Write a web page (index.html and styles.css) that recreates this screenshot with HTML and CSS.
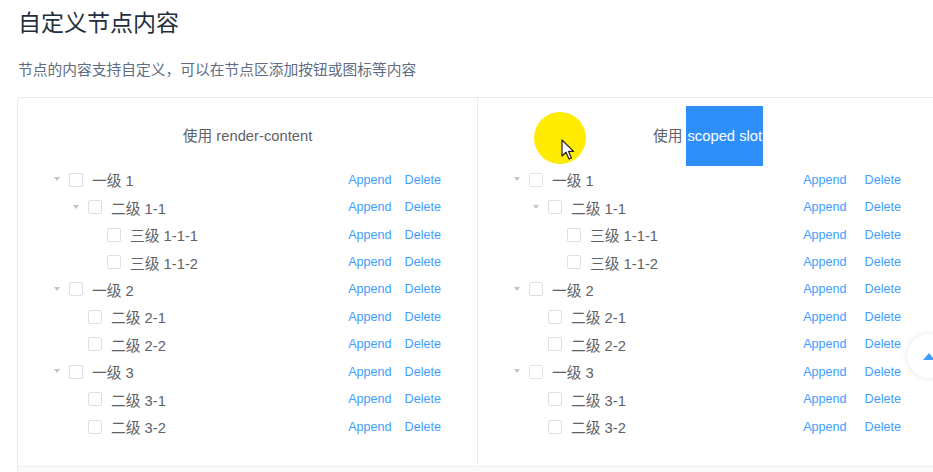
FILE: index.html
```html
<!DOCTYPE html>
<html lang="zh">
<head>
<meta charset="utf-8">
<title>自定义节点内容</title>
<link rel="stylesheet" href="styles.css">
</head>
<body>
<div class="page">
  <h3 class="title">自定义节点内容</h3>
  <p class="desc">节点的内容支持自定义，可以在节点区添加按钮或图标等内容</p>
  <div class="demo">
    <div class="cols">
      <div class="col col-left">
        <div class="col-head">使用 render-content</div>
        <div class="tree">
          <div class="node"><span class="caret"></span><span class="cb"></span><span class="label">一级 1</span><span class="ops"><a>Append</a><a>Delete</a></span></div>
          <div class="node lv2"><span class="caret"></span><span class="cb"></span><span class="label">二级 1-1</span><span class="ops"><a>Append</a><a>Delete</a></span></div>
          <div class="node lv3"><span class="caret leaf"></span><span class="cb"></span><span class="label">三级 1-1-1</span><span class="ops"><a>Append</a><a>Delete</a></span></div>
          <div class="node lv3"><span class="caret leaf"></span><span class="cb"></span><span class="label">三级 1-1-2</span><span class="ops"><a>Append</a><a>Delete</a></span></div>
          <div class="node"><span class="caret"></span><span class="cb"></span><span class="label">一级 2</span><span class="ops"><a>Append</a><a>Delete</a></span></div>
          <div class="node lv2"><span class="caret leaf"></span><span class="cb"></span><span class="label">二级 2-1</span><span class="ops"><a>Append</a><a>Delete</a></span></div>
          <div class="node lv2"><span class="caret leaf"></span><span class="cb"></span><span class="label">二级 2-2</span><span class="ops"><a>Append</a><a>Delete</a></span></div>
          <div class="node"><span class="caret"></span><span class="cb"></span><span class="label">一级 3</span><span class="ops"><a>Append</a><a>Delete</a></span></div>
          <div class="node lv2"><span class="caret leaf"></span><span class="cb"></span><span class="label">二级 3-1</span><span class="ops"><a>Append</a><a>Delete</a></span></div>
          <div class="node lv2"><span class="caret leaf"></span><span class="cb"></span><span class="label">二级 3-2</span><span class="ops"><a>Append</a><a>Delete</a></span></div>
        </div>
      </div>
      <div class="col col-right">
        <div class="col-head">使用 <span class="sel">scoped slot</span></div>
        <div class="tree">
          <div class="node"><span class="caret"></span><span class="cb"></span><span class="label">一级 1</span><span class="ops"><a>Append</a><a>Delete</a></span></div>
          <div class="node lv2"><span class="caret"></span><span class="cb"></span><span class="label">二级 1-1</span><span class="ops"><a>Append</a><a>Delete</a></span></div>
          <div class="node lv3"><span class="caret leaf"></span><span class="cb"></span><span class="label">三级 1-1-1</span><span class="ops"><a>Append</a><a>Delete</a></span></div>
          <div class="node lv3"><span class="caret leaf"></span><span class="cb"></span><span class="label">三级 1-1-2</span><span class="ops"><a>Append</a><a>Delete</a></span></div>
          <div class="node"><span class="caret"></span><span class="cb"></span><span class="label">一级 2</span><span class="ops"><a>Append</a><a>Delete</a></span></div>
          <div class="node lv2"><span class="caret leaf"></span><span class="cb"></span><span class="label">二级 2-1</span><span class="ops"><a>Append</a><a>Delete</a></span></div>
          <div class="node lv2"><span class="caret leaf"></span><span class="cb"></span><span class="label">二级 2-2</span><span class="ops"><a>Append</a><a>Delete</a></span></div>
          <div class="node"><span class="caret"></span><span class="cb"></span><span class="label">一级 3</span><span class="ops"><a>Append</a><a>Delete</a></span></div>
          <div class="node lv2"><span class="caret leaf"></span><span class="cb"></span><span class="label">二级 3-1</span><span class="ops"><a>Append</a><a>Delete</a></span></div>
          <div class="node lv2"><span class="caret leaf"></span><span class="cb"></span><span class="label">二级 3-2</span><span class="ops"><a>Append</a><a>Delete</a></span></div>
        </div>
      </div>
    </div>
    <div class="control"></div>
  </div>
</div>
<div class="cursor-spot"></div>
<svg class="cursor" width="14" height="22" viewBox="0 0 14 22"><path d="M1 1 L1 17 L5 13.2 L8 20 L10.4 19 L7.6 12.4 L12.6 12.4 Z" fill="#fff" stroke="#222" stroke-width="1.2" stroke-linejoin="round"/></svg>
<div class="backtop"><span class="backtop-caret"></span></div>
</body>
</html>
```

FILE: styles.css
```css
html, body {
  margin: 0;
  padding: 0;
  overflow: hidden;
  background: #fff;
}
body {
  font-family: "Liberation Sans", "Noto Sans CJK SC", sans-serif;
  color: #606266;
  width: 933px;
  height: 472px;
  position: relative;
}
.page {
  padding-left: 17px;
}
.title {
  margin: 0;
  padding-top: 8px;
  height: 30px;
  line-height: 30px;
  font-size: 23px;
  font-weight: normal;
  color: #1f2f3d;
  padding-left: 1px;
}
.desc {
  margin: 21px 0 0 1px;
  height: 22px;
  line-height: 22px;
  font-size: 14.75px;
  color: #5e6d82;
}
.demo {
  margin-top: 16px;
  width: 922px;
  border: 1px solid #ebebeb;
  border-radius: 4px;
  box-sizing: border-box;
}
.cols {
  display: flex;
}
.col {
  width: 460px;
  box-sizing: border-box;
  padding: 8px 0 26px 26px;
}
.col-left {
  border-right: 1px solid #ececec;
  padding-right: 36px;
}
.col-right {
  padding-right: 37px;
}
.col-head {
  height: 60px;
  line-height: 60px;
  text-align: center;
  font-size: 14.75px;
  color: #606266;
  margin-left: -26px;
  margin-right: -36px;
}
.col-right .col-head {
  margin-right: -37px;
}
.sel {
  display: inline-block;
  background: #2f8ffa;
  color: #fff;
  padding: 0 1px;
}
.tree {
  display: flex;
  flex-direction: column;
}
.node {
  display: flex;
  align-items: center;
  height: 27.44px;
  font-size: 14.75px;
}
.lv2 { padding-left: 19px; }
.lv3 { padding-left: 38px; }
.caret {
  width: 25px;
  height: 14px;
  display: flex;
  align-items: center;
  justify-content: center;
  flex: none;
}
.caret::before {
  content: "";
  width: 0;
  height: 0;
  border-left: 3.5px solid transparent;
  border-right: 3.5px solid transparent;
  border-top: 4px solid #c0c4cc;
  margin-top: -1px;
}
.caret.leaf::before {
  visibility: hidden;
}
.cb {
  width: 14px;
  height: 14px;
  box-sizing: border-box;
  border: 1px solid #dcdfe6;
  border-radius: 2px;
  background: #fff;
  flex: none;
  margin-right: 9px;
}
.label {
  flex: 1;
  color: #606266;
  white-space: nowrap;
}
.ops {
  display: flex;
  gap: 13px;
  font-size: 12.6px;
  color: #409eff;
}
.col-right .ops {
  gap: 18px;
}
.control {
  height: 44px;
  border-top: 1px solid #eaeefb;
  background: #fafafa;
}
.cursor-spot {
  position: absolute;
  left: 534px;
  top: 112px;
  width: 52px;
  height: 52px;
  border-radius: 50%;
  background: #ffec00;
}
.cursor {
  position: absolute;
  left: 561px;
  top: 139px;
}
.backtop {
  position: absolute;
  left: 907px;
  top: 334px;
  width: 44px;
  height: 44px;
  border-radius: 50%;
  background: #fff;
  box-shadow: 0 0 6px rgba(0, 0, 0, 0.1);
  display: flex;
  align-items: center;
  justify-content: center;
}
.backtop-caret {
  width: 0;
  height: 0;
  border-left: 6px solid transparent;
  border-right: 6px solid transparent;
  border-bottom: 7px solid #409eff;
}
```
